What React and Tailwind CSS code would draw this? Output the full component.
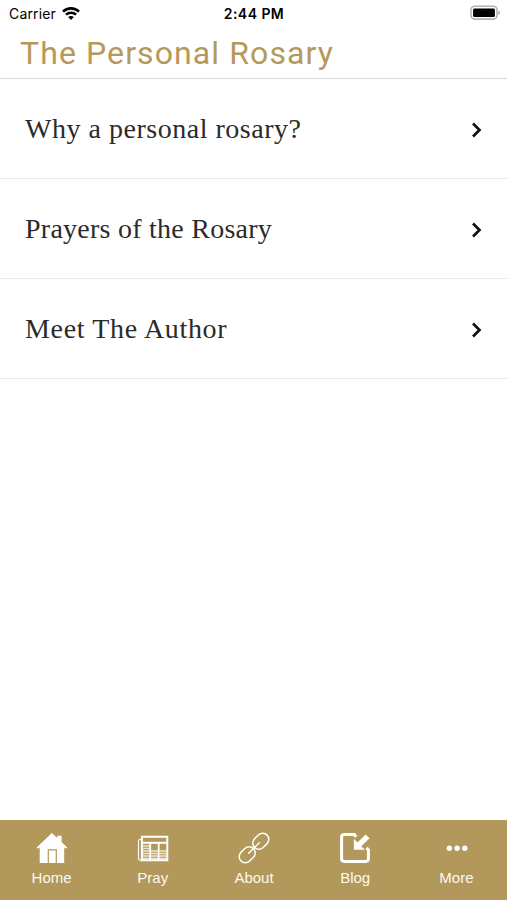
const pages = [
  { title: "Why a personal rosary?", spacing: "tracking-[0.52px]" },
  { title: "Prayers of the Rosary", spacing: "tracking-[0.25px]" },
  { title: "Meet The Author", spacing: "tracking-[0.66px]" },
];

function WifiIcon() {
  return (
    <svg width="18" height="13" viewBox="0 0 18 13" fill="none" stroke="#000">
      <path d="M1 4.6C5.5.3 12.5.3 17 4.6" strokeWidth="2.6" />
      <path d="M3.9 7.7c2.9-2.7 7.3-2.7 10.2 0" strokeWidth="2.4" />
      <path d="M9 12.9L6.2 10c1.6-1.5 4-1.5 5.6 0z" fill="#000" stroke="none" />
    </svg>
  );
}

function BatteryIcon() {
  return (
    <svg width="31" height="16" viewBox="0 0 31 16">
      <rect x="1" y="1.3" width="26" height="12.8" rx="3.6" fill="#fff" stroke="#b4b4b4" strokeWidth="1.6" />
      <rect x="3.1" y="3.5" width="21.8" height="8.6" rx="1.4" fill="#000" />
      <path d="M28.4 5.4c2.3 1.2 2.3 3.4 0 4.6z" fill="#aaa" />
    </svg>
  );
}

function HomeIcon() {
  return (
    <svg width="32" height="32" viewBox="0.7 0 32 32" fill="#fff">
      <path d="M16.5 1L22 6.1V3.8h4.3v6.3l5.6 5.3-1.3 1.3-1.7-1.2V31h-7.3V17.2h-9.2V31H4.4V15.5l-1.7 1.2-1.3-1.3z" />
      <path d="M13.6 18.5h6.8V31h-6.8z" />
    </svg>
  );
}

function NewsIcon() {
  return (
    <svg width="32" height="32" viewBox="0 0 32 32" fill="none" stroke="#fff">
      <path d="M5 7.5H2.7c-.8 0-1.2.4-1.2 1.2v17.7c0 1.1.8 1.9 1.9 1.9" strokeWidth="1.1" />
      <path d="M4.9 4.8h25.4v23.4H3.4c1 0 1.5-.7 1.5-1.6z" strokeWidth="2" />
      <path d="M5.5 10.8h24" strokeWidth="2" />
      <path d="M13.2 11v17M21.7 11v17" strokeWidth="1.8" />
      <g strokeWidth="1.3" strokeOpacity="0.75">
        <path d="M5.5 14h7.5M5.5 16.5h7.5M5.5 19h7.5M5.5 21.5h7.5M5.5 24h7.5M5.5 26.5h7.5" />
        <path d="M14 19h7M14 21.5h7M14 24h7M14 26.5h7" />
        <path d="M22.5 19h7M22.5 21.5h7M22.5 24h7M22.5 26.5h7" />
      </g>
    </svg>
  );
}

function LinkIcon() {
  return (
    <svg width="32" height="32" viewBox="0 0 32 32" fill="none" stroke="#fff" strokeWidth="1.5" strokeLinecap="round">
      <g transform="rotate(-45 16 16)">
        <rect x="-2.4" y="9.9" width="17.6" height="12.2" rx="6.1" />
        <rect x="16.8" y="9.9" width="17.6" height="12.2" rx="6.1" />
        <path d="M8.5 16h15" />
      </g>
    </svg>
  );
}

function BlogIcon() {
  return (
    <svg width="32" height="32" viewBox="0 0 32 32" fill="none" stroke="#fff">
      <path d="M17 5l-1.5-2.4H5.2C3.6 2.6 2.6 3.6 2.6 5.2v21.6c0 1.6 1 2.6 2.6 2.6h21.6c1.6 0 2.6-1 2.6-2.6V18L27.6 15.8" strokeWidth="3" />
      <path d="M14.9 6.8l3.6 3.6 8.1-8 4 3.9-8.3 8 3.7 3.5H14.9z" fill="#fff" stroke="none" />
    </svg>
  );
}

function MoreIcon() {
  return (
    <svg width="32" height="32" viewBox="0 0 32 32" fill="#fff">
      <circle cx="9.4" cy="16.2" r="2.7" />
      <circle cx="17.1" cy="16.2" r="2.7" />
      <circle cx="24.8" cy="16.2" r="2.7" />
    </svg>
  );
}

const tabs = [
  { label: "Home", icon: HomeIcon },
  { label: "Pray", icon: NewsIcon },
  { label: "About", icon: LinkIcon },
  { label: "Blog", icon: BlogIcon },
  { label: "More", icon: MoreIcon },
];

export default function App() {
  return (
    <div className="flex h-screen flex-col bg-white">
      {/* STATUS BAR */}
      <div className="grid h-7 grid-cols-3 items-center pb-[2px] pl-[9px] pr-[6px] font-['Inter',sans-serif] text-[14px] text-black">
        <div className="flex items-center gap-[6px]">
          <span className="tracking-[0.15px]">Carrier</span>
          <WifiIcon />
        </div>
        <span className="whitespace-nowrap pr-[2px] text-center font-semibold tracking-[0.45px]">2:44 PM</span>
        <div className="flex justify-end">
          <BatteryIcon />
        </div>
      </div>

      {/* HEADER */}
      <header className="flex h-[51px] items-center border-b border-[#d9d9d9] pl-[20px]">
        <h1 className="whitespace-nowrap font-['Roboto',sans-serif] text-[32px] leading-none tracking-[1.1px] text-[#b5995a]">
          The Personal Rosary
        </h1>
      </header>

      <main className="flex-1">
        {pages.map((page) => (
          <a
            key={page.title}
            href="#"
            className="flex h-[100px] items-center justify-between border-b border-[#e8e8e8] pl-[25px] pr-[24px] pt-[2px]"
          >
            <span
              className={`pb-px font-['Liberation_Serif',serif] text-[28px] leading-none text-[#2b2b2b] ${page.spacing}`}
            >
              {page.title}
            </span>
            <svg width="12" height="18" viewBox="0 0 12 18" fill="none" stroke="#111" strokeWidth="2.7">
              <path d="M2 2.5l6.5 6.5L2 15.5" />
            </svg>
          </a>
        ))}
      </main>

      {/* TAB BAR */}
      <nav className="grid h-20 grid-cols-5 bg-[#b2985b] pl-px pt-3">
        {tabs.map(({ label, icon: Icon }) => (
          <a key={label} href="#" className="flex flex-col items-center text-[#fdf8f0]">
            <Icon />
            <span className="mt-[5px] font-['Liberation_Sans',sans-serif] text-[15px] leading-[18px]">
              {label}
            </span>
          </a>
        ))}
      </nav>
    </div>
  );
}
